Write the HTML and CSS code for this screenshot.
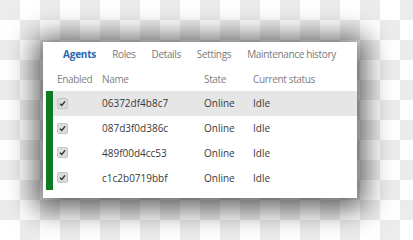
FILE: index.html
```html
<!DOCTYPE html>
<html lang="en">
<head>
    <meta charset="UTF-8">
    <title>Agents</title>
    <link rel="stylesheet" href="styles.css">
</head>
<body>
    <div class="panel">
        <div class="tabs">
            <span class="tab active">Agents</span>
            <span class="tab">Roles</span>
            <span class="tab">Details</span>
            <span class="tab">Settings</span>
            <span class="tab">Maintenance history</span>
        </div>

        <div class="row head">
            <span>Enabled</span>
            <span>Name</span>
            <span>State</span>
            <span>Current status</span>
        </div>

        <div class="rows">
            <div class="row selected">
                <span class="check"><svg viewBox="0 0 10 10"><path d="M2.2 5.2 L4.2 7.2 L7.8 2.6" /></svg></span>
                <span>06372df4b8c7</span>
                <span>Online</span>
                <span>Idle</span>
            </div>
            <div class="row">
                <span class="check"><svg viewBox="0 0 10 10"><path d="M2.2 5.2 L4.2 7.2 L7.8 2.6" /></svg></span>
                <span>087d3f0d386c</span>
                <span>Online</span>
                <span>Idle</span>
            </div>
            <div class="row">
                <span class="check"><svg viewBox="0 0 10 10"><path d="M2.2 5.2 L4.2 7.2 L7.8 2.6" /></svg></span>
                <span>489f00d4cc53</span>
                <span>Online</span>
                <span>Idle</span>
            </div>
            <div class="row">
                <span class="check"><svg viewBox="0 0 10 10"><path d="M2.2 5.2 L4.2 7.2 L7.8 2.6" /></svg></span>
                <span>c1c2b0719bbf</span>
                <span>Online</span>
                <span>Idle</span>
            </div>
        </div>
    </div>
</body>
</html>
```

FILE: styles.css
```css
body {
    margin: 0;
    width: 413px;
    height: 240px;
    overflow: hidden;
    font-family: 'Open Sans', 'Liberation Sans', sans-serif;
    font-size: 10px;
    color: #3a3a3a;
    background-color: #ffffff;
    background-image:
        linear-gradient(45deg, #ececec 25%, transparent 25%, transparent 75%, #ececec 75%),
        linear-gradient(45deg, #ececec 25%, transparent 25%, transparent 75%, #ececec 75%);
    background-size: 40px 40px;
    background-position: 20px 0, 0 20px;
}
.panel {
    margin: 42px 0 0 43px;
    width: 314px;
    height: 156px;
    box-sizing: border-box;
    background-color: #fff;
    box-shadow: 0 3px 26px 8px rgba(0, 0, 0, 0.62);
}
.tabs {
    display: flex;
    align-items: center;
    height: 24px;
    padding-left: 20px;
    gap: 16px;
    letter-spacing: -0.35px;
}
.tab {
    color: #7a7a7a;
}
.tab.active {
    color: #2a67ad;
    font-weight: bold;
    letter-spacing: -0.2px;
}
.row {
    display: grid;
    grid-template-columns: 49px 102px 49px 1fr;
    align-items: center;
    height: 24.75px;
}
.row span:first-child {
    padding-left: 4px;
}
.head {
    margin-left: 10px;
    height: 25px;
    color: #7f7f7f;
    letter-spacing: -0.35px;
}
.rows {
    margin-left: 3px;
    border-left: 7px solid #0e7a22;
}
.selected {
    background-color: #e6e6e6;
}
.check {
    display: flex;
    align-items: center;
}
.check svg {
    width: 9px;
    height: 9px;
    background-color: #dcdcdc;
    border: 1px solid #c4c4c4;
    border-radius: 2px;
    fill: none;
    stroke: #333;
    stroke-width: 1.6;
}
```
